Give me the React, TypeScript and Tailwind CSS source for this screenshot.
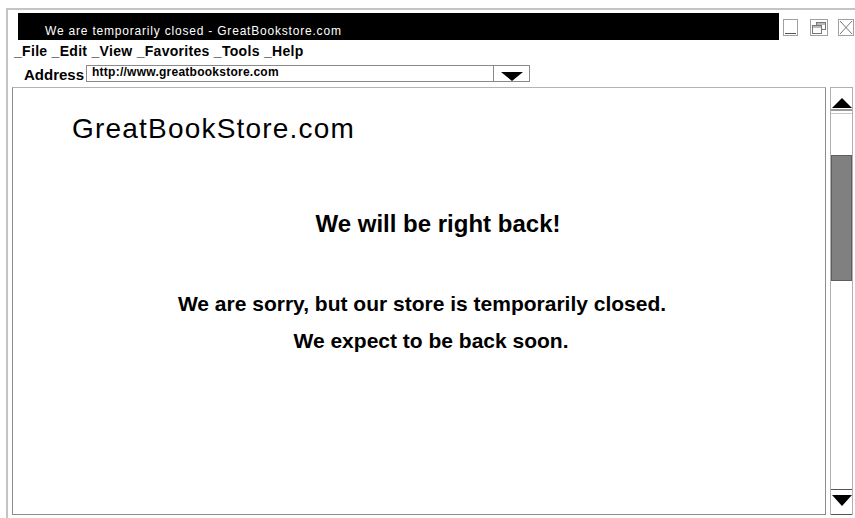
function WindowButtons() {
  return (
    <div className="flex items-start ml-[4px] mt-[6px]">
      {/* minimize */}
      <svg width="15" height="17" viewBox="0 0 15 17">
        <rect x="0.5" y="0.5" width="14" height="16" fill="none" stroke="#a0a0a0" />
        <line x1="2" y1="14.5" x2="13" y2="14.5" stroke="#555" />
      </svg>
      {/* restore */}
      <svg className="ml-[12px]" width="18" height="17" viewBox="0 0 18 17">
        <rect x="0.5" y="0.5" width="17" height="16" fill="none" stroke="#a0a0a0" />
        <rect x="6.5" y="3.5" width="9" height="7" fill="none" stroke="#777" />
        <line x1="6.5" y1="5" x2="15.5" y2="5" stroke="#777" />
        <rect x="2.5" y="6.5" width="9" height="8" fill="white" stroke="#777" />
        <line x1="2.5" y1="8" x2="11.5" y2="8" stroke="#777" />
      </svg>
      {/* close */}
      <svg className="ml-[10px]" width="16" height="17" viewBox="0 0 16 17">
        <rect x="0.5" y="0.5" width="15" height="16" fill="none" stroke="#a0a0a0" />
        <line x1="2" y1="2" x2="14" y2="15" stroke="#777" />
        <line x1="14" y1="2" x2="2" y2="15" stroke="#777" />
      </svg>
    </div>
  );
}

function Scrollbar() {
  return (
    <div className="ml-[4px] w-[23px] h-[428px] border-l border-r border-[#b0b0b0] flex flex-col">
      <div className="h-[22px] border-t border-[#b0b0b0] flex items-end justify-center pb-[1px]">
        <svg width="20" height="10" viewBox="0 0 20 10">
          <polygon points="10,0 20,10 0,10" fill="black" />
        </svg>
      </div>
      <div className="h-[2px] bg-[#999]" />
      <div className="h-[2px]" />
      <div className="h-[1px] bg-[#c8c8c8]" />
      <div className="h-[41px]" />
      <div className="h-[126px] bg-[#808080] border border-[#5e5e5e]" />
      <div className="flex-1" />
      <div className="h-[26px] border-t border-b border-[#555] flex items-start justify-center pt-[5px]">
        <svg width="20" height="11" viewBox="0 0 20 11">
          <polygon points="0,0 20,0 10,11" fill="black" />
        </svg>
      </div>
    </div>
  );
}

export default function App() {
  return (
    <div className="w-[855px] h-[518px] bg-white overflow-hidden text-black font-['Liberation_Sans',Arial,sans-serif]">
      <div className="ml-[6px] mt-[8px] h-[510px] border-t-2 border-l-2 border-[#c4c4c4] flex flex-col">
        {/* title bar */}
        <div className="flex items-start pt-[3px] h-[30px]">
          <div className="ml-[10px] w-[761px] h-[27px] shrink-0 bg-black text-white text-[12px] leading-[13px] pl-[27px] pt-[12px] tracking-[0.8px]">
            We are temporarily closed - GreatBookstore.com
          </div>
          <WindowButtons />
        </div>

        {/* menu bar */}
        <div className="h-[23px] pt-[4px] pl-[6px] text-[14px] leading-[15px] font-bold tracking-[0.3px] whitespace-pre">
          {"_File _Edit _View _Favorites _Tools _Help"}
        </div>

        {/* address bar */}
        <div className="h-[24px] flex items-start">
          <div className="ml-[16px] mt-[3px] text-[15px] leading-[17px] font-bold">Address</div>
          <div className="ml-[2px] mt-[2px] flex h-[17px] border border-[#8a8a8a]">
            <div className="w-[406px] pl-[5px] text-[12px] leading-[12px] font-bold tracking-[0.25px]">
              http://www.greatbookstore.com
            </div>
            <div className="w-[36px] border-l border-[#8a8a8a] flex items-end justify-center">
              <svg width="22" height="9" viewBox="0 0 22 9">
                <polygon points="0,0 22,0 11,9" fill="black" />
              </svg>
            </div>
          </div>
        </div>

        {/* page area */}
        <div className="flex ml-[4px]">
          <div className="w-[814px] h-[428px] border border-[#8c8c8c] border-t-[#b4b4b4] flex flex-col">
            <div className="pl-[59px] pt-[25px] text-[28px] leading-[32px] tracking-[1.2px]">
              GreatBookStore.com
            </div>
            <div className="mt-[65px] pl-[38px] text-center font-bold text-[24px] leading-[28px]">
              We will be right back!
            </div>
            <div className="mt-[54px] pl-[6px] text-center font-bold text-[21px] leading-[24px]">
              We are sorry, but our store is temporarily closed.
            </div>
            <div className="mt-[13px] pl-[24px] text-center font-bold text-[21px] leading-[24px]">
              We expect to be back soon.
            </div>
          </div>
          <Scrollbar />
        </div>
      </div>
    </div>
  );
}
